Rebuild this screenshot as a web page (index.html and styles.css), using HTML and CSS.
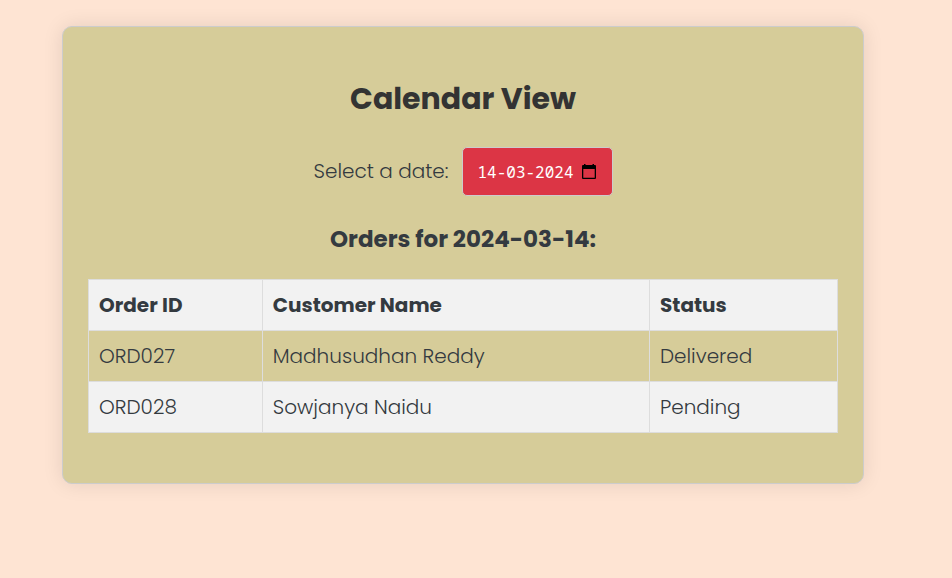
FILE: index.html
```html
<!DOCTYPE html>
<html lang="en">
<head>
<meta charset="utf-8">
<meta name="viewport" content="width=device-width, initial-scale=1">
<title>Calendar View</title>
<link rel="stylesheet" href="styles.css">
</head>
<body>
<main class="card">
  <h1 class="title">Calendar View</h1>
  <div class="picker">
    <label for="order-date">Select a date:</label>
    <div class="date-field">
      <input id="order-date" class="date-input" type="text" value="14-03-2024" size="10">
      <button class="date-button" type="button" aria-label="Open calendar">
        <svg width="16" height="16" viewBox="0 0 16 16" aria-hidden="true"><path fill="currentColor" fill-rule="evenodd" d="M3 0h1.500v1h7V0H13v1h1a1 1 0 0 1 1 1v12a1 1 0 0 1-1 1H2a1 1 0 0 1-1-1V2a1 1 0 0 1 1-1h1zM2.300 5v8.700h11.400V5z"/></svg>
      </button>
    </div>
  </div>
  <h2 class="subtitle">Orders for 2024-03-14:</h2>
  <table class="orders">
    <colgroup><col class="col-id"><col class="col-name"><col class="col-status"></colgroup>
    <thead>
      <tr><th scope="col">Order ID</th><th scope="col">Customer Name</th><th scope="col">Status</th></tr>
    </thead>
    <tbody>
      <tr><td>ORD027</td><td>Madhusudhan Reddy</td><td>Delivered</td></tr>
      <tr><td>ORD028</td><td>Sowjanya Naidu</td><td>Pending</td></tr>
    </tbody>
  </table>
</main>
</body>
</html>
```
FILE: styles.css
```css
* {
  box-sizing: border-box;
}

body {
  margin: 0;
  padding: 26px 88px 26px 62px;
  background: #fee4d3;
  color: #343a40;
  font-family: Poppins, Inter, sans-serif;
  font-size: 20px;
  font-weight: 300;
  line-height: 30px;
}

.card {
  max-width: 802px;
  margin: 0 auto;
  padding: 50px 25px;
  border: 1px solid #ccc;
  border-radius: 10px;
  background: #d6cc99;
  box-shadow: 0 0 20px rgba(0, 0, 0, 0.1);
}

.title {
  margin: 0 0 26px;
  color: #333;
  font-size: 30px;
  font-weight: 700;
  line-height: 44px;
  text-align: center;
}

.picker {
  display: flex;
  align-items: baseline;
  justify-content: center;
  gap: 13px;
}

.date-field {
  display: flex;
  align-items: center;
  gap: 5px;
  padding: 10px 15px;
  border: 1px solid #ccc;
  border-radius: 5px;
  background: #dc3545;
}

.date-input {
  width: 98px;
  height: 27px;
  padding: 0;
  border: 0;
  background: transparent;
  color: #fff;
  font-family: "Noto Sans Mono", "DejaVu Sans Mono", monospace;
  font-size: 16px;
}

.date-button {
  display: flex;
  padding: 0;
  border: 0;
  background: transparent;
  color: #000;
}

.subtitle {
  margin: 25px 0 22px;
  font-size: 23px;
  font-weight: 700;
  line-height: 36px;
  text-align: center;
}

.orders {
  width: 100%;
  border-collapse: collapse;
  table-layout: fixed;
}

.col-id {
  width: 23.2%;
}

.col-name {
  width: 51.7%;
}

.orders th,
.orders td {
  padding: 10px;
  border: 1px solid #ddd;
  text-align: left;
}

.orders th {
  font-weight: 700;
}

.orders thead tr,
.orders tbody tr:nth-child(even) {
  background: #f2f2f2;
}
```
